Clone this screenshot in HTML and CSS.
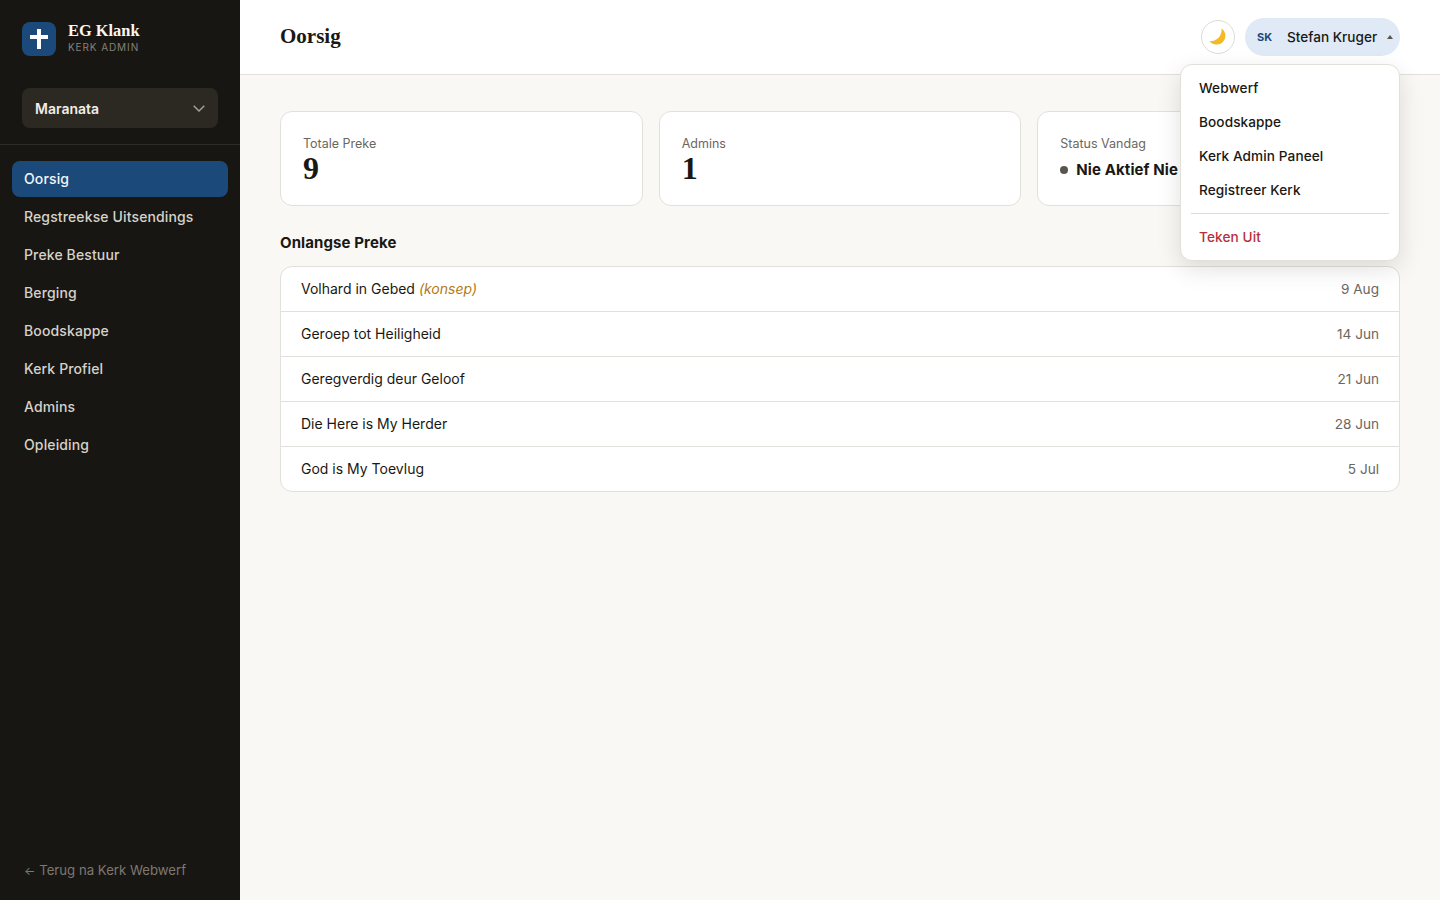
FILE: index.html
```html
<!DOCTYPE html>
<html lang="en">
<head>
    <meta charset="UTF-8">
    <meta name="viewport" content="width=device-width, initial-scale=1.0">
    <title>Oorsig - EG Klank</title>
    <link rel="stylesheet" href="styles.css">
</head>
<body>
    <aside class="sidebar">
        <div class="brand">
            <div class="brand-logo">
                <svg width="18" height="20" viewBox="0 0 18 20"><path d="M7 0h4v6h7v4h-7v10H7V10H0V6h7z" fill="#fff"/></svg>
            </div>
            <div class="brand-text">
                <div class="brand-name">EG Klank</div>
                <div class="brand-sub">KERK ADMIN</div>
            </div>
        </div>
        <div class="church-picker">
            <div class="church-select">
                <span>Maranata</span>
                <svg width="12" height="7" viewBox="0 0 12 7"><path d="M.7.7 6 6l5.3-5.3" fill="none" stroke="#a8a299" stroke-width="1.4"/></svg>
            </div>
        </div>
        <nav class="side-nav">
            <a class="nav-item active">Oorsig</a>
            <a class="nav-item">Regstreekse Uitsendings</a>
            <a class="nav-item">Preke Bestuur</a>
            <a class="nav-item">Berging</a>
            <a class="nav-item">Boodskappe</a>
            <a class="nav-item">Kerk Profiel</a>
            <a class="nav-item">Admins</a>
            <a class="nav-item">Opleiding</a>
        </nav>
        <a class="back-link"><span class="back-arrow">←</span> Terug na Kerk Webwerf</a>
    </aside>

    <div class="main">
        <header class="topbar">
            <h1>Oorsig</h1>
            <div class="topbar-right">
                <button class="theme-btn">
                    <svg width="18" height="18" viewBox="0 0 18 18"><path d="M12.500.500A8.800 8.800 0 1 1 .500 13 11 11 0 0 0 12.500.500z" fill="#f5b921"/></svg>
                </button>
                <button class="user-btn">
                    <span class="user-initials">SK</span>
                    <span class="user-name">Stefan Kruger</span>
                    <span class="user-caret"></span>
                </button>
                <div class="user-menu">
                    <a class="menu-item">Webwerf</a>
                    <a class="menu-item">Boodskappe</a>
                    <a class="menu-item">Kerk Admin Paneel</a>
                    <a class="menu-item">Registreer Kerk</a>
                    <div class="menu-divider"></div>
                    <a class="menu-item danger">Teken Uit</a>
                </div>
            </div>
        </header>

        <main class="content">
            <section class="stats">
                <div class="stat-card">
                    <div class="stat-label">Totale Preke</div>
                    <div class="stat-value">9</div>
                </div>
                <div class="stat-card">
                    <div class="stat-label">Admins</div>
                    <div class="stat-value">1</div>
                </div>
                <div class="stat-card">
                    <div class="stat-label">Status Vandag</div>
                    <div class="stat-status"><span class="dot"></span>Nie Aktief Nie</div>
                </div>
            </section>

            <h2 class="section-title">Onlangse Preke</h2>
            <div class="sermon-list">
                <div class="sermon-row"><span>Volhard in Gebed <em class="draft">(konsep)</em></span><span class="sermon-date">9 Aug</span></div>
                <div class="sermon-row"><span>Geroep tot Heiligheid</span><span class="sermon-date">14 Jun</span></div>
                <div class="sermon-row"><span>Geregverdig deur Geloof</span><span class="sermon-date">21 Jun</span></div>
                <div class="sermon-row"><span>Die Here is My Herder</span><span class="sermon-date">28 Jun</span></div>
                <div class="sermon-row"><span>God is My Toevlug</span><span class="sermon-date">5 Jul</span></div>
            </div>
        </main>
    </div>
</body>
</html>
```

FILE: styles.css
```css
:root {
    --sidebar-bg: #181612;
    --primary: #1b4a7a;
    --page-bg: #f9f8f4;
    --border: #e2e0da;
    --text: #1a1814;
    --muted: #6b665e;
}

* {
    margin: 0;
    padding: 0;
    box-sizing: border-box;
}

body {
    display: flex;
    min-height: 900px;
    height: 100vh;
    overflow: hidden;
    font-family: 'Inter', 'Noto Sans', sans-serif;
    font-size: 14px;
    color: var(--text);
    background-color: var(--page-bg);
}

.sidebar {
    width: 240px;
    flex-shrink: 0;
    display: flex;
    flex-direction: column;
    background-color: var(--sidebar-bg);
}

.brand {
    display: flex;
    align-items: center;
    gap: 12px;
    height: 78px;
    padding: 0 22px;
}

.brand-logo {
    width: 34px;
    height: 34px;
    display: flex;
    align-items: center;
    justify-content: center;
    background-color: var(--primary);
    border-radius: 8px;
}

.brand-text {
    padding-bottom: 3px;
}

.brand-name {
    font-family: 'Liberation Serif', serif;
    font-size: 16.4px;
    font-weight: 700;
    line-height: 20px;
    color: #f8f7f3;
}

.brand-sub {
    font-size: 10px;
    line-height: 14px;
    letter-spacing: 0.9px;
    color: #85807a;
    margin-top: -1px;
}

.church-picker {
    padding: 10px 22px 16px;
    border-bottom: 1px solid #2e2b25;
}

.church-select {
    display: flex;
    align-items: center;
    justify-content: space-between;
    height: 40px;
    padding: 0 13px;
    background-color: #2c2822;
    border-radius: 8px;
    font-size: 14px;
    font-weight: 600;
    color: #f0eee8;
}

.side-nav {
    display: flex;
    flex-direction: column;
    gap: 2px;
    padding: 16px 12px;
    flex: 1;
}

.nav-item {
    display: block;
    height: 36px;
    line-height: 36px;
    padding: 0 12px;
    border-radius: 8px;
    font-size: 14px;
    font-weight: 500;
    letter-spacing: 0.13px;
    color: #d6d2ca;
}

.nav-item.active {
    background-color: var(--primary);
    color: #f4f6f8;
}

.back-link {
    padding: 0 24px 20px;
    font-size: 13.2px;
    line-height: 18px;
    color: #7d7870;
}

.back-arrow {
    font-size: 12px;
}

.main {
    flex: 1;
    min-width: 0;
}

.topbar {
    display: flex;
    align-items: center;
    justify-content: space-between;
    height: 75px;
    padding: 0 40px;
    background-color: #fff;
    border-bottom: 1px solid var(--border);
}

.topbar h1 {
    font-family: 'Liberation Serif', serif;
    font-size: 21px;
    font-weight: 700;
    margin-top: -2px;
}

.topbar-right {
    position: relative;
    display: flex;
    align-items: center;
    gap: 10px;
}

.theme-btn {
    width: 34px;
    height: 34px;
    display: flex;
    align-items: center;
    justify-content: center;
    background-color: #fff;
    border: 1px solid #dddbd5;
    border-radius: 50%;
}

.user-btn {
    display: flex;
    align-items: center;
    width: 155px;
    height: 38px;
    padding: 0 7px 0 12px;
    background-color: #dfeaf6;
    border: none;
    border-radius: 19px;
    font-family: inherit;
    color: var(--text);
}

.user-initials {
    width: 30px;
    text-align: left;
    font-size: 11px;
    font-weight: 700;
    color: var(--primary);
}

.user-name {
    flex: 1;
    text-align: left;
    font-size: 13.600px;
    font-weight: 500;
}

.user-caret {
    width: 0;
    height: 0;
    border-left: 3px solid transparent;
    border-right: 3px solid transparent;
    border-bottom: 4px solid #5a564f;
}

.user-menu {
    position: absolute;
    top: 46px;
    right: 0;
    width: 220px;
    height: 197px;
    padding: 6px 0 0;
    background-color: #fff;
    border: 1px solid var(--border);
    border-radius: 12px;
    box-shadow: 0 8px 24px rgba(0, 0, 0, 0.12);
    z-index: 10;
}

.menu-item {
    display: block;
    height: 34px;
    line-height: 34px;
    padding: 0 18px;
    font-size: 13.600px;
    font-weight: 500;
    letter-spacing: 0.1px;
}

.menu-item.danger {
    color: #b5303c;
}

.menu-divider {
    height: 1px;
    margin: 6px 10px;
    background-color: #dddbd5;
}

.content {
    padding: 36px 40px;
}

.stats {
    display: grid;
    grid-template-columns: repeat(3, 1fr);
    gap: 16px;
    margin-bottom: 27px;
}

.stat-card {
    height: 95px;
    padding: 24px 22px;
    background-color: #fff;
    border: 1px solid var(--border);
    border-radius: 12px;
}

.stat-label {
    font-size: 12.500px;
    line-height: 16px;
    color: var(--muted);
}

.stat-value {
    font-family: 'Liberation Serif', serif;
    font-size: 32px;
    font-weight: 700;
    line-height: 34px;
    margin-top: -1px;
}

.stat-status {
    display: flex;
    align-items: center;
    margin-top: 9px;
    font-size: 15px;
    font-weight: 700;
    line-height: 18px;
    letter-spacing: 0.1px;
}

.dot {
    width: 8px;
    height: 8px;
    margin-right: 8px;
    background-color: #5a564f;
    border-radius: 50%;
}

.section-title {
    font-size: 15px;
    font-weight: 700;
    line-height: 20px;
    letter-spacing: 0.1px;
    margin-bottom: 13px;
}

.sermon-list {
    background-color: #fff;
    border: 1px solid var(--border);
    border-radius: 12px;
}

.sermon-row {
    display: flex;
    align-items: center;
    justify-content: space-between;
    height: 45px;
    padding: 0 20px 1px;
    font-size: 14px;
    border-bottom: 1px solid var(--border);
}

.sermon-row:last-child {
    height: 44px;
    border-bottom: none;
}

.draft {
    color: #b57a14;
}

.sermon-date {
    font-size: 13.600px;
    color: var(--muted);
}
```
